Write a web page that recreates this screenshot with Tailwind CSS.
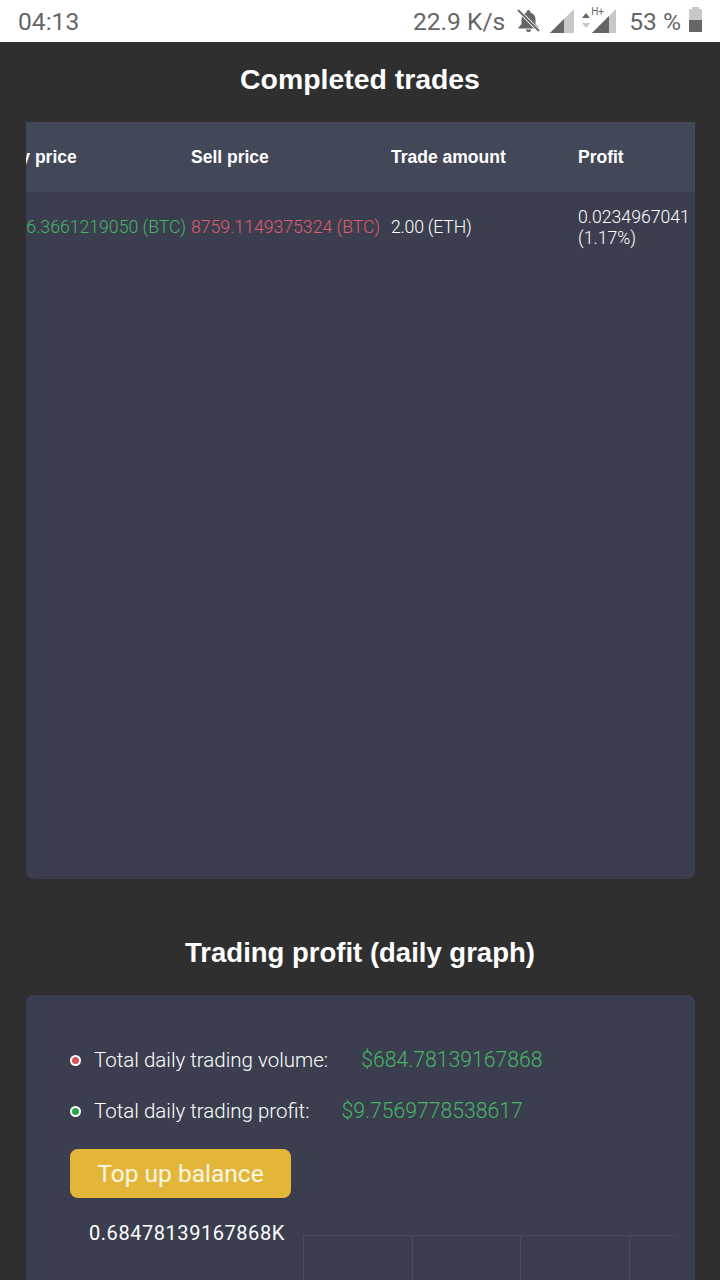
<!DOCTYPE html>
<html lang="en">
<head>
  <meta charset="UTF-8">
  <meta name="viewport" content="width=device-width, initial-scale=1.0">
  <title>Completed trades</title>
  <script src="https://cdn.jsdelivr.net/npm/@tailwindcss/browser@4"></script>
</head>
<body class="bg-[#2f2f2f] h-[1280px] overflow-hidden font-['Liberation_Sans',sans-serif] text-white">

  <!-- status bar -->
  <div class="h-[42px] bg-white flex items-center justify-between pl-[18px] pr-[18px] text-[#666] font-['Roboto',sans-serif] text-[24.600px]">
    <span class="mt-[3px]">04:13</span>
    <div class="flex items-center">
      <span class="mt-[3px]">22.9 K/s</span>
      <svg class="ml-[11px] w-[25px] h-[24px]" viewBox="0 0 25 24" fill="#666">
        <path d="M12.500 1c-1 0-1.800.8-1.800 1.800v.6C7.500 4.200 5.500 7 5.500 10v5L2.500 18.500v1h20v-1l-3-3.500v-5c0-3-2-5.800-5.200-6.600v-.6C14.300 1.800 13.500 1 12.500 1z"/>
        <path d="M10 20.500h5a2.500 2.500 0 0 1-5 0z"/>
        <path d="M2 1l21 21" stroke="#fff" stroke-width="3.500"/>
        <path d="M2 1l21 21" stroke="#666" stroke-width="1.800"/>
      </svg>
      <svg class="ml-[9px] w-[24px] h-[24px]" viewBox="0 0 24 24">
        <path d="M24 0v24H0z" fill="#c8c8c8"/>
        <path d="M14 10v14H0z" fill="#666"/>
      </svg>
      <svg class="ml-[6px] w-[12px] h-[18px]" viewBox="0 0 12 18">
        <path d="M6 1l4 5H2z" fill="#666"/>
        <path d="M6 16l4-5H2z" fill="#c8c8c8"/>
      </svg>
      <div class="relative w-[24px] h-[24px]">
        <svg class="w-[24px] h-[24px]" viewBox="0 0 24 24">
          <path d="M24 0v24H0z" fill="#c8c8c8"/>
          <path d="M17 7v17H0z" fill="#666"/>
        </svg>
        <span class="absolute left-[-1px] top-[-3px] text-[10px] leading-[12px]">H+</span>
      </div>
      <span class="ml-[13px] mt-[3px]">53 %</span>
      <div class="ml-[8px] w-[13px] h-[23px] relative bg-[#c8c8c8] rounded-[1px] flex flex-col justify-end">
        <div class="absolute left-[3px] top-[-2px] w-[7px] h-[3px] bg-[#c8c8c8]"></div>
        <div class="h-[12px] bg-[#666]"></div>
      </div>
    </div>
  </div>

  <h2 class="mt-[19px] text-center text-[28.400px] leading-[36px] font-bold">Completed trades</h2>

  <!-- trades table -->
  <section class="mt-[25px] ml-[26px] w-[669px] h-[757px] bg-[#3b3e4e] rounded-b-[8px] overflow-hidden">
    <div class="h-[70px] bg-[#434859] flex items-center ml-[-29px] text-[17.500px] font-bold">
      <div class="w-[194px] shrink-0">Buy price</div>
      <div class="w-[200px] shrink-0">Sell price</div>
      <div class="w-[187px] shrink-0">Trade amount</div>
      <div class="shrink-0">Profit</div>
    </div>
    <div class="h-[70px] flex items-center ml-[-29px] text-[17.650px] leading-[21px] font-['Roboto',sans-serif] font-light">
      <div class="w-[194px] shrink-0 text-[#46b565] whitespace-nowrap">8746.3661219050 (BTC)</div>
      <div class="w-[200px] shrink-0 text-[#e05a6a] whitespace-nowrap">8759.1149375324 (BTC)</div>
      <div class="w-[187px] shrink-0 text-white tracking-[-0.2px]">2.00 (ETH)</div>
      <div class="w-[113px] shrink-0 text-white pt-[1px]">0.0234967041 (1.17%)</div>
    </div>
  </section>

  <h2 class="mt-[56px] text-center text-[27.500px] leading-[36px] font-bold">Trading profit (daily graph)</h2>

  <!-- daily graph card -->
  <section class="relative mt-[24px] ml-[26px] w-[669px] h-[300px] bg-[#3b3e4e] rounded-t-[8px] pt-[50px] pl-[44px] text-[20.500px] leading-[30px] text-white font-['Roboto',sans-serif] font-light">
    <div class="flex items-center h-[30px]">
      <span class="w-[11px] h-[11px] rounded-full bg-white flex items-center justify-center"><span class="w-[7px] h-[7px] rounded-full bg-[#d9505c]"></span></span>
      <span class="ml-[13px]">Total daily trading volume:</span>
      <span class="ml-[33px] text-[21.200px] text-[#46b565]">$684.78139167868</span>
    </div>
    <div class="flex items-center h-[30px] mt-[21px]">
      <span class="w-[11px] h-[11px] rounded-full bg-white flex items-center justify-center"><span class="w-[7px] h-[7px] rounded-full bg-[#28a745]"></span></span>
      <span class="ml-[13px]">Total daily trading profit:</span>
      <span class="ml-[32px] text-[21.200px] text-[#46b565]">$9.7569778538617</span>
    </div>
    <button class="block mt-[23px] w-[221px] h-[49px] rounded-[8px] bg-[#e3b63a] text-[#fbf6e6] font-['Roboto',sans-serif] font-normal text-[24.500px]">Top up balance</button>
    <div class="mt-[20px] ml-[19px] font-['Roboto',sans-serif] font-normal text-[20px] leading-[30px] text-white tracking-[0.55px]">0.68478139167868K</div>
    <!-- chart grid -->
    <div class="absolute left-[277px] top-[240px] w-[375px] h-[60px] border-t border-dotted border-[#50546a] flex">
      <div class="w-[108.500px] border-l border-[#474b5d]"></div>
      <div class="w-[108.500px] border-l border-[#474b5d]"></div>
      <div class="w-[108.500px] border-l border-[#474b5d]"></div>
      <div class="w-[49px] border-l border-[#474b5d]"></div>
    </div>
  </section>

</body>
</html>
